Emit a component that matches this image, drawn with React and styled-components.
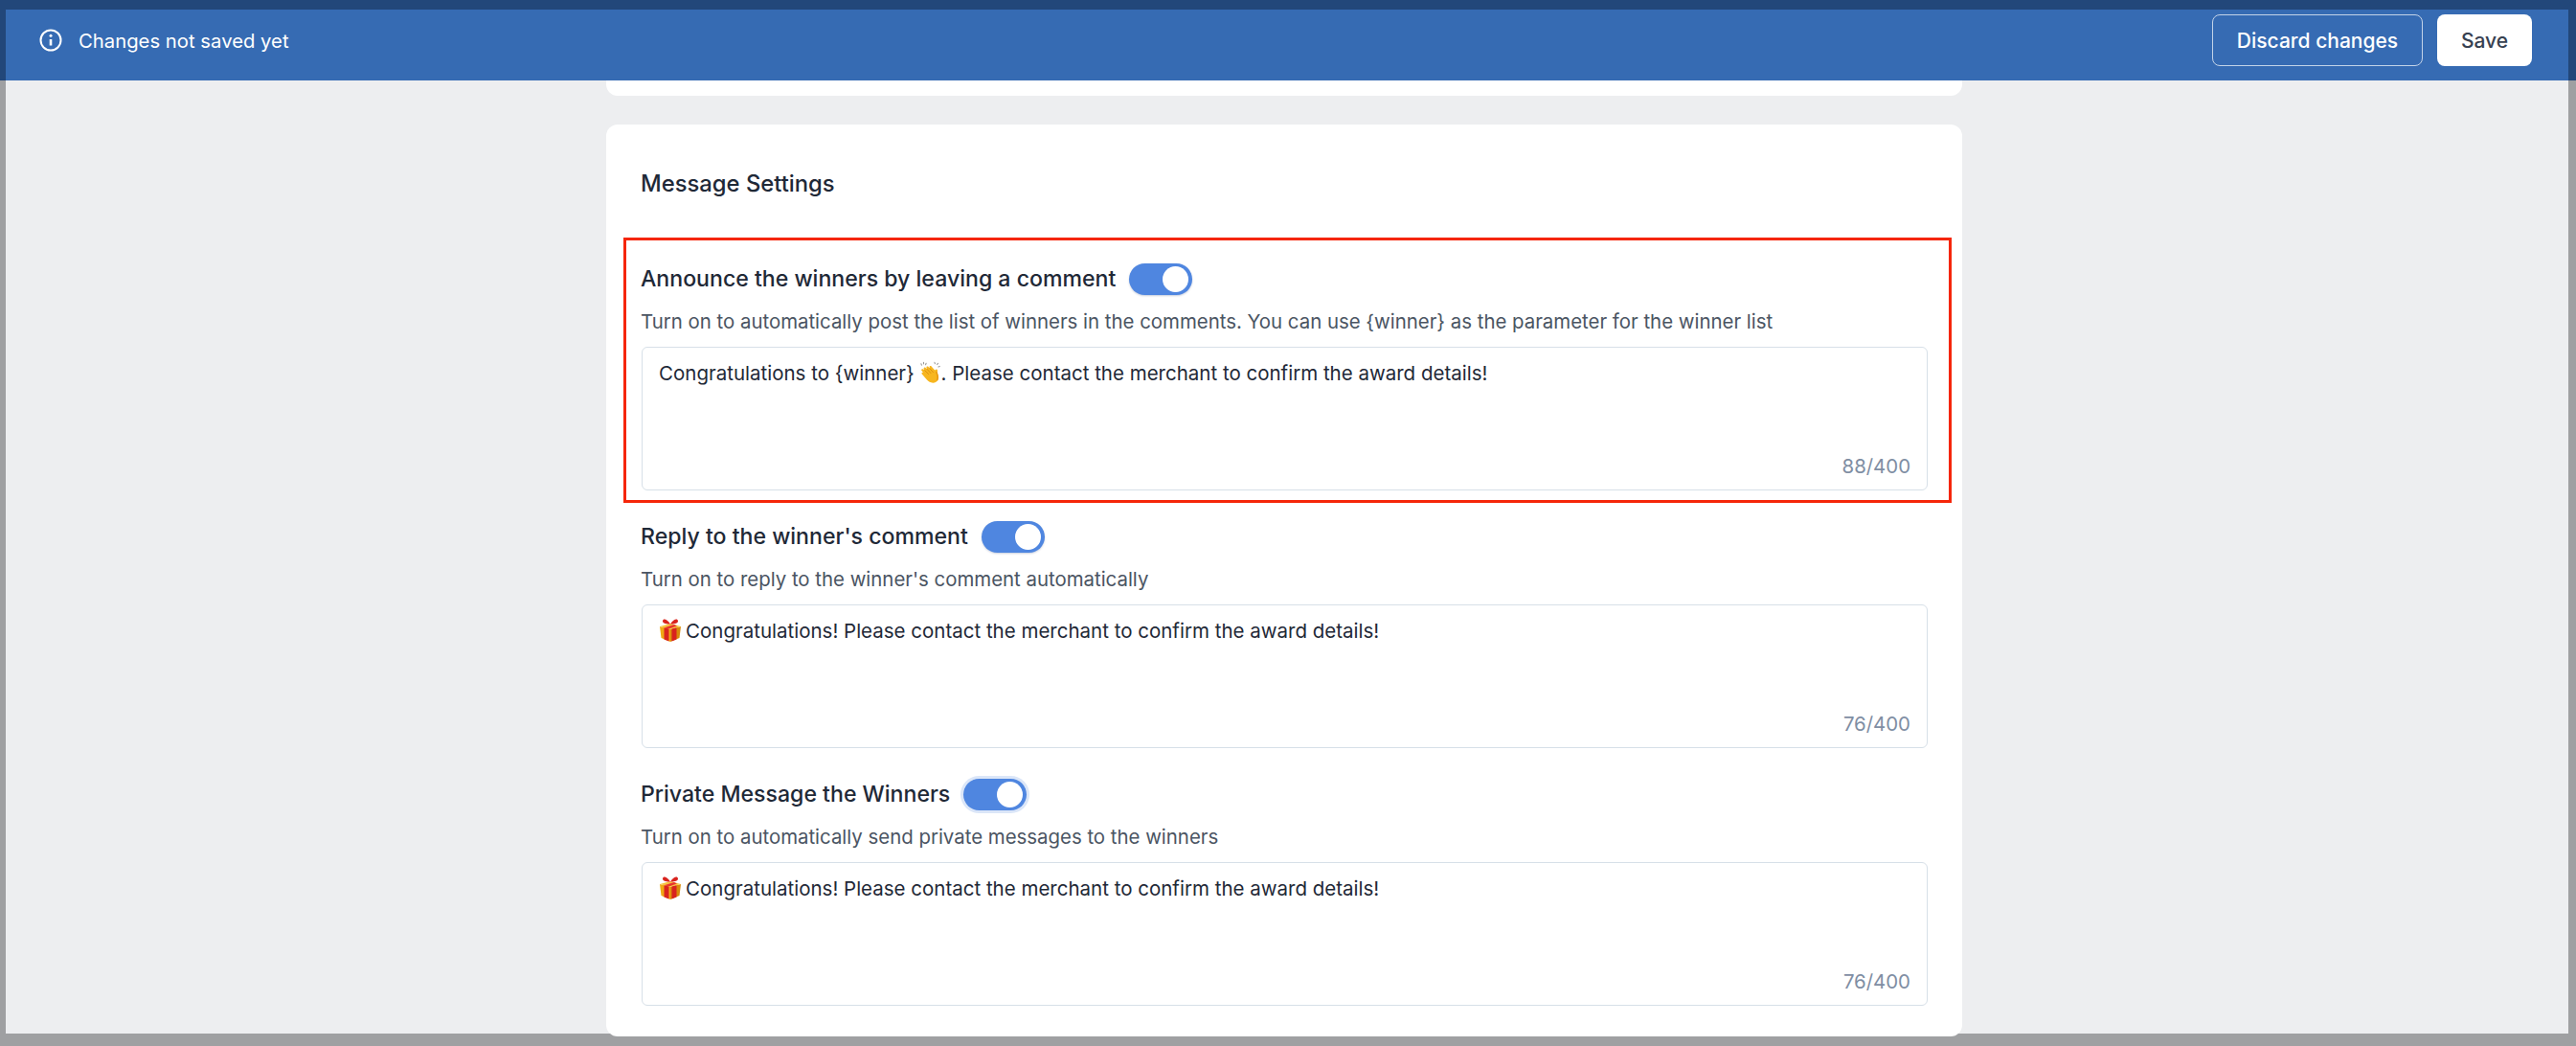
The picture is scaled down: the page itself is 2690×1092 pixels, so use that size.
import React from "react";
import styled, { createGlobalStyle } from "styled-components";

const Global = createGlobalStyle`
  html, body { margin: 0; padding: 0; height: 100%; }
  body { font-family: Inter, "Liberation Sans", sans-serif; overflow: hidden; background: #9fa0a2; }
`;

const Screen = styled.div`
  width: 2690px;
  height: 1092px;
  display: flex;
  flex-direction: column;
  background: #9fa0a2;
`;

const TopFrame = styled.header`
  flex: none;
  background: #22477a;
  padding: 10px 8px 0 6px;
`;

const SaveBar = styled.div`
  height: 74px;
  box-sizing: border-box;
  background: #366bb3;
  display: flex;
  align-items: center;
  justify-content: space-between;
  padding: 0 38px 10px 35px;
`;

const Notice = styled.div`
  display: flex;
  align-items: center;
  gap: 17px;
  color: #fff;
  font-size: 20.3px;
  font-weight: 400;
`;

const BarActions = styled.div`
  display: flex;
  gap: 15px;
`;

const BarButton = styled.button`
  height: 54px;
  box-sizing: border-box;
  width: ${(p) => p.$width}px;
  border-radius: 8px;
  font: 500 21px Inter, sans-serif;
  padding: 0;
  color: ${(p) => (p.$primary ? "#374151" : "#fff")};
  background: ${(p) => (p.$primary ? "#fff" : "transparent")};
  border: ${(p) => (p.$primary ? "none" : "1px solid #c3d3e8")};
`;

const Page = styled.main`
  flex: none;
  height: 995px;
  margin: 0 8px 0 6px;
  background: #edeef0;
  display: flex;
  flex-direction: column;
  align-items: center;
  padding-right: 6px;
`;

const CardStub = styled.div`
  flex: none;
  width: 1416px;
  height: 16px;
  background: #fff;
  border-radius: 0 0 12px 12px;
  margin-bottom: 30px;
`;

const Card = styled.section`
  flex: 1;
  width: 1416px;
  box-sizing: border-box;
  background: #fff;
  border-radius: 12px;
  padding: 46px 36px 0 37px;
`;

const CardTitle = styled.h2`
  margin: 0 0 67px -1px;
  font-size: 23.8px;
  line-height: 32px;
  font-weight: 500;
  color: #1f2937;
`;

const Highlight = styled.div`
  position: absolute;
  left: -19px;
  right: -25px;
  top: -27px;
  height: 277px;
  box-sizing: border-box;
  border: 3px solid #f5260a;
  pointer-events: none;
`;

const Setting = styled.div`
  position: relative;
  height: 269px;
`;

const SettingHead = styled.div`
  display: flex;
  align-items: center;
  gap: 14px;
  height: 33px;
`;

const SettingTitle = styled.span`
  margin-left: -1px;
  font-size: 23.1px;
  font-weight: 500;
  color: #1f2937;
  line-height: 33px;
`;

const Toggle = styled.span`
  width: 66px;
  height: 33px;
  box-sizing: border-box;
  border-radius: 17px;
  background: #4f86e0;
  display: flex;
  align-items: center;
  justify-content: flex-end;
  padding-right: 4px;
  box-shadow: ${(p) =>
    p.$focused ? "0 0 0 3px #dbe6f8" : "0 1px 2px rgba(30,60,120,.25)"};
`;

const Knob = styled.span`
  width: 27px;
  height: 27px;
  border-radius: 50%;
  background: #fff;
`;

const Description = styled.p`
  margin: 14px 0 0 -1px;
  font-size: 20.4px;
  line-height: 27px;
  color: #4b5563;
  height: 27px;
`;

const MessageBox = styled.div`
  margin-top: 13px;
  height: 150px;
  box-sizing: border-box;
  border: 1px solid #d7e0e8;
  border-radius: 6px;
  padding: 13px 17px 11px;
  display: flex;
  flex-direction: column;
  justify-content: space-between;
`;

const MessageText = styled.div`
  font-size: 20.5px;
  line-height: 27px;
  color: #1f2937;
  display: flex;
  align-items: center;
  white-space: pre;
`;

const Counter = styled.div`
  align-self: flex-end;
  font-size: 20.4px;
  line-height: 27px;
  color: #7f8ea3;
`;

const InfoIcon = () => (
  <svg width="24" height="24" viewBox="0 0 24 24" fill="none" stroke="#fff" strokeWidth="2">
    <circle cx="12" cy="12" r="10.5" />
    <path d="M12 11v6.5" strokeWidth="2.6" />
    <circle cx="12" cy="7.2" r="1.5" fill="#fff" stroke="none" />
  </svg>
);

const ClapEmoji = () => (
  <svg width="22" height="26" viewBox="0 0 25 26" preserveAspectRatio="xMinYMid meet" style={{ marginTop: -2 }}>
    <g stroke="#9a9a9a" strokeWidth="1.2" strokeLinecap="round">
      <path d="M1 2.5l.6 1.6M4 .8v1.8M7 2l-.7 1.6M17 .9l.5 1.6M21 2l-1 1.4M23 5.5l-1.5.7" />
    </g>
    <path d="M1.5 10.5c-.8-1 .4-2.4 1.6-1.7L5 10 4.2 8.5c-.6-1.2.9-2.4 1.9-1.5L7.8 8.6 7.3 7c-.3-1.3 1.4-2 2.2-1l1.6 1.8-.2-1.5c-.1-1.2 1.5-1.8 2.3-.8l4 4.6 1.4-.9c1-.5 1.9.4 1.8 1.4l-.2 3c1.4 2.6 2 5.3 1 7.5-1.3 3-5 4.8-8.4 3.6-2.4-.8-4.4-2.8-6.4-5L2 14.6c-.9-1 .2-2.5 1.4-1.8z" fill="#f7b61f" />
    <path d="M5 10l5 5M7.8 8.6l5 5.4M11 7.8l4.6 5.2" stroke="#d98c10" strokeWidth="1" fill="none" />
    <path d="M19 12c1.6 3.4 2.4 6.6 1 10" stroke="#e8960f" strokeWidth="1.6" fill="none" />
  </svg>
);

const GiftEmoji = () => (
  <svg width="24" height="25" viewBox="0 0 24 25" style={{ marginRight: 4, marginTop: -3 }}>
    <path d="M1 9l11 3v13L2.5 21z" fill="#f0a814" />
    <path d="M23 9l-11 3v13l9.5-4z" fill="#d98a0a" />
    <path d="M1 9l11-3 11 3-11 3z" fill="#f8c440" />
    <path d="M5.5 10.2l5 1.4v13l-5-2.2zM18.5 10.2l-5 1.4v13l5-2.2z" fill="#d9231e" />
    <path d="M5.5 10.2L16 7l3 1.6L10.5 11.6z" fill="#e8362c" />
    <path d="M12 6.5C8.5 1 4.5 0 4 3.2 3.8 5.6 8 6.8 12 6.5zM12 6.5c3.5-5.5 7.5-6.5 8-3.3.2 2.4-4 3.6-8 3.3z" fill="#d9231e" />
  </svg>
);

const settings = [
  {
    title: "Announce the winners by leaving a comment",
    hint: "Turn on to automatically post the list of winners in the comments. You can use {winner} as the parameter for the winner list",
    text: (
      <>
        {"Congratulations to {winner} "}
        <ClapEmoji />
        {". Please contact the merchant to confirm the award details!"}
      </>
    ),
    count: "88/400",
    marked: true,
  },
  {
    title: "Reply to the winner's comment",
    hint: "Turn on to reply to the winner's comment automatically",
    text: (
      <>
        <GiftEmoji />
        {"Congratulations! Please contact the merchant to confirm the award details!"}
      </>
    ),
    count: "76/400",
  },
  {
    title: "Private Message the Winners",
    hint: "Turn on to automatically send private messages to the winners",
    text: (
      <>
        <GiftEmoji />
        {"Congratulations! Please contact the merchant to confirm the award details!"}
      </>
    ),
    count: "76/400",
    focused: true,
  },
];

export default function App() {
  return (
    <Screen>
      <Global />
      <TopFrame>
        <SaveBar>
          <Notice>
            <InfoIcon />
            Changes not saved yet
          </Notice>
          <BarActions>
            <BarButton $width={220}>Discard changes</BarButton>
            <BarButton $width={99} $primary>Save</BarButton>
          </BarActions>
        </SaveBar>
      </TopFrame>
      <Page>
        <CardStub />
        <Card>
          <CardTitle>Message Settings</CardTitle>
          {settings.map((s) => (
            <Setting key={s.title}>
              {s.marked && <Highlight />}
              <SettingHead>
                <SettingTitle>{s.title}</SettingTitle>
                <Toggle $focused={s.focused}><Knob /></Toggle>
              </SettingHead>
              <Description>{s.hint}</Description>
              <MessageBox>
                <MessageText>{s.text}</MessageText>
                <Counter>{s.count}</Counter>
              </MessageBox>
            </Setting>
          ))}
        </Card>
      </Page>
    </Screen>
  );
}
